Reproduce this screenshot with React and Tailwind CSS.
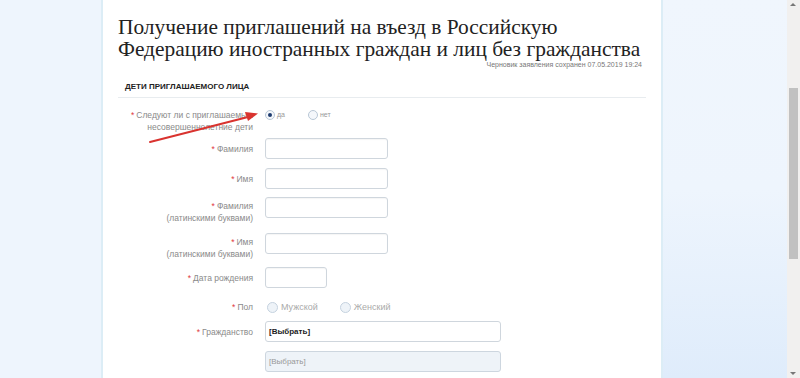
import React from 'react';

function Star() {
    return <span className="text-[#e0393e] mr-[2px]">*</span>;
}

function Radio({ checked, label }) {
    return (
        <label className="flex items-center gap-[2px] text-[7px] text-[#999]">
            <span className="w-[10px] h-[10px] rounded-full border border-[#b8c7d6] bg-[#f4f7fb] flex items-center justify-center">
                {checked && <span className="w-[4px] h-[4px] rounded-full bg-[#1e3c6e]"></span>}
            </span>
            {label}
        </label>
    );
}

function BigRadio({ label }) {
    return (
        <label className="flex items-center gap-[3px] text-[9px] text-[#aaa]">
            <span className="w-[11px] h-[11px] rounded-full border border-[#c5d2df] bg-[#eef3f8]"></span>
            {label}
        </label>
    );
}

function Input({ w }) {
    return <div className={`h-[21px] ${w} rounded-[3px] border border-[#cfd6dd] bg-white shadow-[inset_0_1px_1px_rgba(0,0,0,0.04)]`}></div>;
}

export default function App() {
    return (
        <div className="h-[378px] w-[800px] flex overflow-hidden" style={{ fontFamily: '"Liberation Sans", Arial, sans-serif' }}>
            <div className="w-[101px] bg-[#eef5fd]"></div>

            <div className="relative w-[562px] bg-white border-l-2 border-r-2 border-[#dcedf6] pl-[15px] pr-[13px]">
                <h1 className="pt-[16px] text-[21.4px] leading-[22px] text-[#222] whitespace-nowrap" style={{ fontFamily: '"Liberation Serif", "Times New Roman", serif' }}>
                    Получение приглашений на въезд в Российскую<br />
                    Федерацию иностранных граждан и лиц без гражданства
                </h1>
                <div className="text-right text-[7px] leading-[9px] text-[#777] pr-[6px]">
                    Черновик заявления сохранен 07.05.2019 19:24
                </div>

                <div className="mt-[12px] pl-[7px] pb-[4px] border-b border-[#e8ecef] text-[8px] font-bold text-[#222] mr-[2px]">
                    ДЕТИ ПРИГЛАШАЕМОГО ЛИЦА
                </div>

                <div className="flex flex-col text-[8.5px] leading-[12px] text-[#8a8a8a]">
                    <div className="mt-[11px] flex items-start">
                        <div className="w-[135px] text-right"><Star />Следуют ли с приглашаемым<br />несовершеннолетние дети</div>
                        <div className="ml-[12px] flex gap-[23px] pt-[0px]">
                            <Radio checked label="да" />
                            <Radio label="нет" />
                        </div>
                    </div>

                    <div className="mt-[5px] flex items-center">
                        <div className="w-[135px] text-right"><Star />Фамилия</div>
                        <div className="ml-[12px]"><Input w="w-[123px]" /></div>
                    </div>

                    <div className="mt-[9px] flex items-center">
                        <div className="w-[135px] text-right"><Star />Имя</div>
                        <div className="ml-[12px]"><Input w="w-[123px]" /></div>
                    </div>

                    <div className="mt-[8px] flex items-start">
                        <div className="w-[135px] text-right pt-[3px]"><Star />Фамилия<br />(латинскими буквами)</div>
                        <div className="ml-[12px]"><Input w="w-[123px]" /></div>
                    </div>

                    <div className="mt-[9px] flex items-start">
                        <div className="w-[135px] text-right pt-[3px]"><Star />Имя<br />(латинскими буквами)</div>
                        <div className="ml-[12px]"><Input w="w-[123px]" /></div>
                    </div>

                    <div className="mt-[7px] flex items-center">
                        <div className="w-[135px] text-right"><Star />Дата рождения</div>
                        <div className="ml-[12px]"><Input w="w-[62px]" /></div>
                    </div>

                    <div className="mt-[13px] flex items-center">
                        <div className="w-[135px] text-right"><Star />Пол</div>
                        <div className="ml-[14px] flex gap-[22px]">
                            <BigRadio label="Мужской" />
                            <BigRadio label="Женский" />
                        </div>
                    </div>

                    <div className="mt-[8px] flex items-center">
                        <div className="w-[135px] text-right"><Star />Гражданство</div>
                        <div className="ml-[12px] h-[21px] w-[236px] rounded-[3px] border border-[#cfd6dd] bg-white flex items-center pl-[3px] text-[8px] font-bold text-[#222]">
                            [Выбрать]
                        </div>
                    </div>

                    <div className="mt-[9px] flex items-center">
                        <div className="w-[135px]"></div>
                        <div className="ml-[12px] h-[21px] w-[236px] rounded-[3px] border border-[#cdd6df] bg-[#eef3f8] flex items-center pl-[3px] text-[8px] text-[#999]">
                            [Выбрать]
                        </div>
                    </div>
                </div>

                <svg className="absolute left-0 top-0 pointer-events-none" width="562" height="378">
                    <line x1="47" y1="142" x2="145" y2="117" stroke="#d9332f" strokeWidth="2" strokeLinecap="round" />
                    <polygon points="155,113.5 142,112 145,121" fill="#d9332f" />
                </svg>
            </div>

            <div className="flex-1 bg-gradient-to-b from-[#f0f6fd] via-[#eef5fd] to-[#dfecfb]"></div>

            <div className="relative w-[13px] bg-[#f1f0ef]">
                <div className="absolute left-[3px] top-[3px] w-0 h-0 border-l-[3px] border-r-[3px] border-b-[3px] border-l-transparent border-r-transparent border-b-[#777]"></div>
                <div className="absolute left-[2px] top-[88px] w-[9px] h-[171px] bg-[#c1c1c1]"></div>
                <div className="absolute left-[3px] bottom-[3px] w-0 h-0 border-l-[3px] border-r-[3px] border-t-[3px] border-l-transparent border-r-transparent border-t-[#777]"></div>
            </div>
        </div>
    );
}
